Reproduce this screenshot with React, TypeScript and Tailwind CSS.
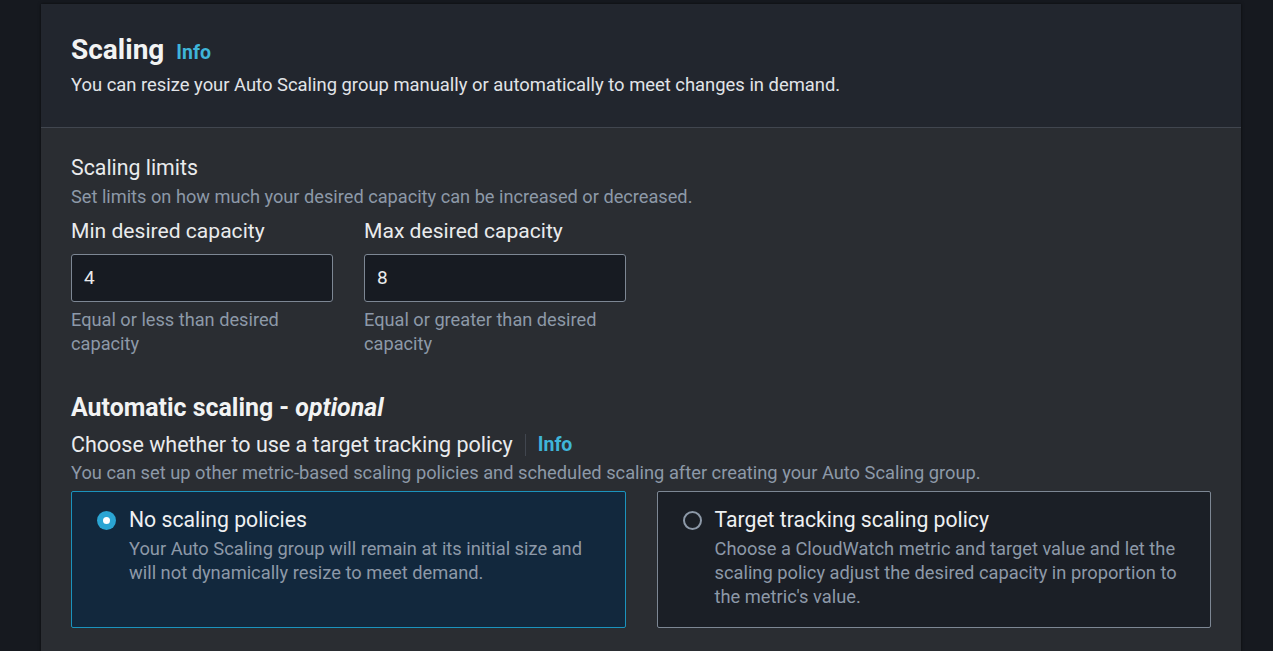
import React from "react";

function Radio({ checked }: { checked: boolean }) {
  return checked ? (
    <span className="mt-[5px] flex h-[19px] w-[19px] shrink-0 items-center justify-center rounded-full bg-[#2ba5d3]">
      <span className="h-[7px] w-[7px] rounded-full bg-white" />
    </span>
  ) : (
    <span className="mt-[5px] h-[19px] w-[19px] shrink-0 rounded-full border-2 border-[#8d99a8]" />
  );
}

function PolicyCard({
  checked,
  title,
  text,
}: {
  checked: boolean;
  title: string;
  text: string;
}) {
  return (
    <div
      className={
        checked
          ? "flex gap-[13px] rounded-[2px] border border-[#1b93bd] bg-[#12283d] pl-[25px] pr-6 pt-[14px] pb-[18px]"
          : "flex gap-[13px] rounded-[2px] border border-[#7d8794] bg-[#1b1f26] pl-[25px] pr-6 pt-[14px] pb-[18px]"
      }
    >
      <Radio checked={checked} />
      <div>
        <p className="text-[21.2px] leading-[28px] text-[#eef0f2]">{title}</p>
        <p className="mt-[3px] text-[18.3px] leading-[24px] text-[#8d99a8]">{text}</p>
      </div>
    </div>
  );
}

export default function App() {
  return (
    <div className="h-[651px] overflow-hidden bg-[#16191f] pt-[4px] font-['Roboto',sans-serif]">
      <div className="ml-[41px] w-[1200px] bg-[#2a2d32] shadow-[0_0_3px_rgba(0,0,0,0.6)]">
        {/* Header */}
        <header className="border-b border-[#41464f] bg-[#22262e] px-[30px] pt-[28px] pb-[30px]">
          <div className="flex items-baseline gap-[12px]">
            <h1 className="text-[28px] font-bold leading-[36px] text-[#f2f3f3]">Scaling</h1>
            <a className="text-[19.5px] font-bold text-[#3fb5d9]">Info</a>
          </div>
          <p className="mt-[5px] text-[18.4px] leading-[24px] text-[#e1e4e8]">
            You can resize your Auto Scaling group manually or automatically to meet changes in demand.
          </p>
        </header>

        <div className="px-[30px] pt-[26px] pb-10">
          {/* Scaling limits */}
          <section>
            <h2 className="text-[21.3px] leading-[28px] text-[#e9ebed]">Scaling limits</h2>
            <p className="mt-[3px] text-[18.2px] leading-[24px] text-[#8d99a8]">
              Set limits on how much your desired capacity can be increased or decreased.
            </p>
            <div className="mt-[8px] flex gap-[31px]">
              <div className="w-[262px]">
                <label className="block text-[21.1px] leading-[28px] text-[#e9ebed]">Min desired capacity</label>
                <div className="mt-[9px] flex h-[48px] items-center rounded-[3px] border border-[#7d8794] bg-[#171b22] px-[12px] text-[19px] text-[#e9ebed]">
                  4
                </div>
                <p className="mt-[6px] text-[18.2px] leading-[24px] text-[#8d99a8]">Equal or less than desired capacity</p>
              </div>
              <div className="w-[262px]">
                <label className="block text-[21.1px] leading-[28px] text-[#e9ebed]">Max desired capacity</label>
                <div className="mt-[9px] flex h-[48px] items-center rounded-[3px] border border-[#7d8794] bg-[#171b22] px-[12px] text-[19px] text-[#e9ebed]">
                  8
                </div>
                <p className="mt-[6px] text-[18.2px] leading-[24px] text-[#8d99a8]">Equal or greater than desired capacity</p>
              </div>
            </div>
          </section>

          {/* Automatic scaling */}
          <section className="mt-[37px]">
            <h2 className="text-[24.9px] font-bold leading-[30px] text-[#f2f3f3]">
              Automatic scaling - <i>optional</i>
            </h2>
            <div className="mt-[7px] flex items-center">
              <h3 className="text-[21.5px] leading-[28px] text-[#e9ebed]">
                Choose whether to use a target tracking policy
              </h3>
              <span className="mx-[12px] h-[22px] w-px bg-[#41464f]" />
              <a className="text-[19.5px] font-bold text-[#3fb5d9]">Info</a>
            </div>
            <p className="mt-[2px] text-[18.3px] leading-[24px] text-[#8d99a8]">
              You can set up other metric-based scaling policies and scheduled scaling after creating your Auto Scaling
              group.
            </p>
            <div className="mt-[6px] grid grid-cols-2 gap-[31px]">
              <PolicyCard
                checked
                title="No scaling policies"
                text="Your Auto Scaling group will remain at its initial size and will not dynamically resize to meet demand."
              />
              <PolicyCard
                checked={false}
                title="Target tracking scaling policy"
                text="Choose a CloudWatch metric and target value and let the scaling policy adjust the desired capacity in proportion to the metric's value."
              />
            </div>
          </section>
        </div>
      </div>
    </div>
  );
}
